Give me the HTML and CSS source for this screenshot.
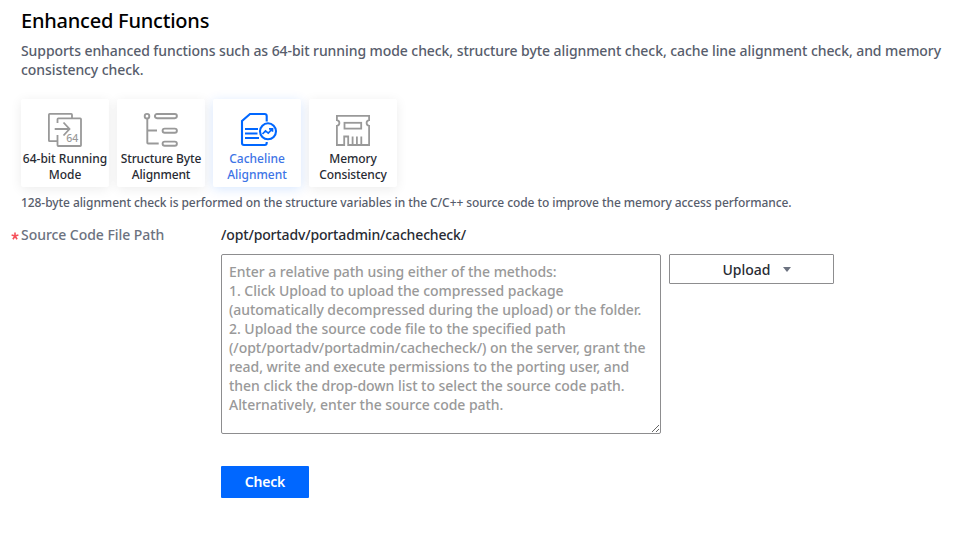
FILE: index.html
```html
<!DOCTYPE html>
<html lang="en">
<head>
<meta charset="utf-8">
<title>Enhanced Functions</title>
<link rel="stylesheet" href="styles.css">
</head>
<body>
<main class="page">
  <h1 class="title">Enhanced Functions</h1>
  <p class="intro">Supports enhanced functions such as 64-bit running mode check, structure byte alignment check, cache line alignment check, and memory<br>consistency check.</p>
  <div class="cards">
    <button class="card">
      <svg class="icon" width="36" height="36" viewBox="0 0 36 36" fill="none" stroke="#999" stroke-width="1.8">
        <path d="M25 6V2.700Q25 1.900 24.200 1.900H2.700Q1.900 1.900 1.900 2.700V28.400Q1.900 29.200 2.700 29.200H10.500"/>
        <path d="M10.500 11V7.200Q10.500 6.400 11.300 6.400H33.200Q34 6.400 34 7.200V33.200Q34 34 33.200 34H11.300Q10.500 34 10.500 33.200V23M7.700 17H22M16.500 10.500L22.500 17L16.500 23.500"/>
        <text class="bits" x="19.200" y="30.200">64</text>
      </svg>
      <span class="label c1">64-bit Running<br>Mode</span>
    </button>
    <button class="card">
      <svg class="icon" width="36" height="36" viewBox="0 0 36 36" fill="none" stroke="#999" stroke-width="1.9">
        <circle cx="4" cy="4.200" r="2.300"/>
        <rect x="11.900" y="2" width="22" height="4.200" rx="2.100"/>
        <rect x="19.600" y="16.600" width="14.300" height="4.200" rx="2.100"/>
        <rect x="19.600" y="29.600" width="14.300" height="4.200" rx="2.100"/>
        <path d="M4.300 6.500V30.700Q4.300 31.500 5.100 31.500H15.700M4.300 18.500H14"/>
      </svg>
      <span class="label c2">Structure Byte<br>Alignment</span>
    </button>
    <button class="card active">
      <svg class="icon" width="36" height="36" viewBox="0 0 36 36" fill="none" stroke="#0067ff" stroke-width="2.1">
        <path d="M27.700 9.500V4Q27.700 2 25.700 2H11L3 9V31Q3 33 5 33H25.700Q27.700 33 27.700 31V30M6 17H19M6 21.500H18.500M6 26H20"/>
        <circle cx="29" cy="19.300" r="8"/>
        <path stroke-width="1.700" d="M23.500 22L26.500 18.800L29.300 21.100L33.200 17M30 16.800H33.500V19.800"/>
      </svg>
      <span class="label c3">Cacheline<br>Alignment</span>
    </button>
    <button class="card">
      <svg class="icon" width="36" height="36" viewBox="0 0 36 36" fill="none" stroke="#999" stroke-width="1.8">
        <path d="M1.900 3.900H34.100V8.200Q31.600 8.700 31.600 11Q31.600 13.300 34.100 13.800V33H13.200V24.500H9.200V33H1.900V13.800Q4.400 13.300 4.400 11Q4.400 8.700 1.900 8.200ZM17.600 24.500V33M21.900 24.500V33M26.300 24.500V33"/>
        <rect x="9.500" y="10.800" width="16.700" height="5.800"/>
      </svg>
      <span class="label c4">Memory<br>Consistency</span>
    </button>
  </div>
  <p class="note">128-byte alignment check is performed on the structure variables in the C/C++ source code to improve the memory access performance.</p>
  <form class="form">
    <label class="field-label" for="path"><svg class="required" width="8" height="8" viewBox="0 0 8 8" stroke="#f5515b" stroke-width="1.600"><path d="M4 .5V4M.6 3L4 4L7.400 3M1.900 7.200L4 4L6.100 7.200"/></svg>Source Code File Path</label>
    <div class="field">
      <div class="base-path">/opt/portadv/portadmin/cachecheck/</div>
      <div class="row">
        <textarea class="path" id="path" placeholder="Enter a relative path using either of the methods:
1. Click Upload to upload the compressed package
(automatically decompressed during the upload) or the folder.
2. Upload the source code file to the specified path
(/opt/portadv/portadmin/cachecheck/) on the server, grant the
read, write and execute permissions to the porting user, and
then click the drop-down list to select the source code path.
Alternatively, enter the source code path."></textarea>
        <button class="upload" type="button"><span>Upload</span><i class="caret"></i></button>
      </div>
      <button class="check" type="button">Check</button>
    </div>
  </form>
</main>
</body>
</html>
```

FILE: styles.css
```css
* { box-sizing: border-box; }
body { margin: 0; background: #fff; font-family: "Noto Sans", sans-serif; font-size: 14px; color: #282b33; }
button, textarea { font: inherit; margin: 0; }
.page { padding: 7px 0 0 21px; white-space: nowrap; }
.title { margin: 0; font-size: 20px; font-weight: 500; line-height: 28px; letter-spacing: -.22px; color: #000; }
.intro { margin: 6px 0 0; font-weight: 500; line-height: 19px; letter-spacing: -.077px; color: #575d6c; }
.cards { display: flex; gap: 8px; margin-top: 20px; }
.card { width: 88px; height: 88px; padding: 13px 0 0; border: 0; border-radius: 2px; background: #fff; box-shadow: 0 2px 12px rgba(0, 0, 0, .08); display: flex; flex-direction: column; align-items: center; font-size: 12px; font-weight: 500; line-height: 16px; color: #282b33; }
.card.active { color: #3d74e6; box-shadow: 0 2px 12px rgba(0, 103, 255, .16); }
.icon { display: block; flex: none; overflow: visible; }
.label { margin-top: 3px; }
.c2, .c4 { letter-spacing: -.12px; }
.bits { font-size: 10.5px; font-weight: 500; fill: #999; stroke: none; }
.note { margin: 8px 0 0; font-size: 12px; font-weight: 500; line-height: 16px; letter-spacing: -.075px; color: #575d6c; }
.form { display: flex; margin-top: 14px; }
.field-label { width: 200px; line-height: 20px; font-weight: 500; letter-spacing: -.05px; color: #6c7280; }
.required { margin: 0 2px 0 -10px; fill: none; }
.base-path { line-height: 20px; font-weight: 500; letter-spacing: -.15px; }
.row { display: flex; gap: 8px; align-items: flex-start; margin-top: 9px; }
.path { width: 440px; height: 180px; padding: 7px; border: 1px solid #8d8d8f; border-radius: 2px; line-height: 19px; font-weight: 500; letter-spacing: -.04px; resize: both; overflow: hidden; }
.path::placeholder { color: #999; opacity: 1; white-space: pre; }
.upload { width: 165px; height: 30px; padding: 0 0 0 10px; border: 1px solid #8d8d8f; border-radius: 1px; background: #fff; color: #282b33; display: flex; align-items: center; justify-content: center; gap: 12px; font-weight: 500; }
.caret { margin-top: 1px; border: 4px solid transparent; border-top: 5px solid #6c7280; border-bottom: 0; }
.check { display: block; width: 88px; height: 32px; margin-top: 32px; padding: 0 0 1px; border: 0; border-radius: 1px; background: #0067ff; color: #fff; font-weight: 600; letter-spacing: -.2px; }
```
